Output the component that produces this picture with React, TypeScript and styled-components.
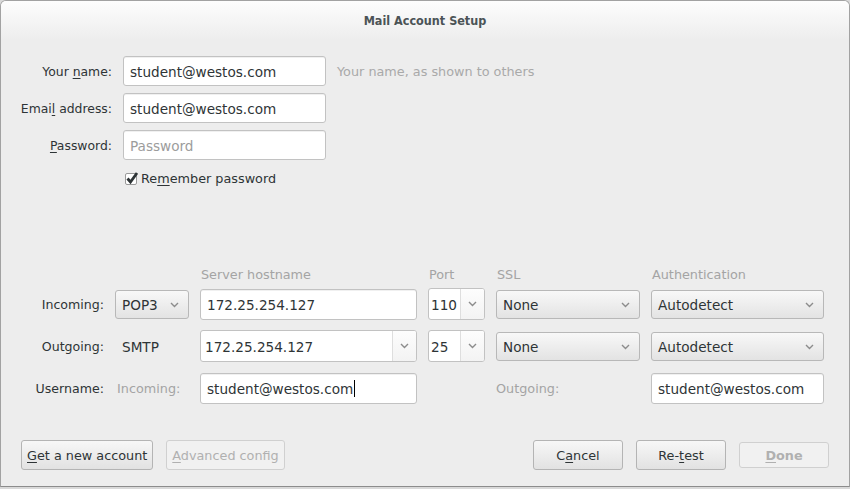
import React from 'react'
import styled, { createGlobalStyle } from 'styled-components'

const GlobalStyle = createGlobalStyle`
  html, body {
    margin: 0;
    padding: 0;
    background: #d9d9d9;
    overflow: hidden;
  }
  body {
    font-family: 'DejaVu Sans', 'Open Sans', sans-serif;
    color: #2e3436;
  }
`

const Chevron = () => (
  <svg width="9" height="6" viewBox="0 0 9 6">
    <polyline points="1,1 4.5,4.5 8,1" fill="none" stroke="#8c8c8c" strokeWidth="1.4" />
  </svg>
)

const Key: React.FC<{ children: React.ReactNode }> = ({ children }) => <Mnemonic>{children}</Mnemonic>

export default function App() {
  return (
    <>
      <GlobalStyle />
      <Window>
        <TitleBar>Mail Account Setup</TitleBar>
        <Content>
          <TopForm>
            <Label>
              Your <Key>n</Key>ame:
            </Label>
            <Field>student@westos.com</Field>
            <Hint>Your name, as shown to others</Hint>

            <Label>
              Emai<Key>l</Key> address:
            </Label>
            <Field>student@westos.com</Field>
            <span />

            <Label>
              <Key>P</Key>assword:
            </Label>
            <Field placeholder>Password</Field>
            <span />

            <span />
            <CheckRow>
              <svg width="15" height="15" viewBox="0 0 15 15">
                <rect x="0.5" y="2.5" width="11" height="11" rx="1.5" fill="#fff" stroke="#9a9a9a" />
                <polyline points="2.5,7.5 5.5,11 12,2" fill="none" stroke="#2e3436" strokeWidth="2.8" />
              </svg>
              <CheckText>
                Re<Key>m</Key>ember password
              </CheckText>
            </CheckRow>
          </TopForm>

          <ServerHeader>
            <span />
            <span />
            <ColHead>Server hostname</ColHead>
            <ColHead>Port</ColHead>
            <ColHead>SSL</ColHead>
            <ColHead>Authentication</ColHead>
          </ServerHeader>

          <ServerGrid>
            <RowLabel>Incoming:</RowLabel>
            <Select>
              POP3
              <Chevron />
            </Select>
            <Field $tall>172.25.254.127</Field>
            <Combo>
              <ComboText $pad={2}>110</ComboText>
              <ComboArrow>
                <Chevron />
              </ComboArrow>
            </Combo>
            <Select>
              None
              <Chevron />
            </Select>
            <Select>
              Autodetect
              <Chevron />
            </Select>

            <RowLabel>Outgoing:</RowLabel>
            <Plain>SMTP</Plain>
            <Combo>
              <ComboText $pad={4}>172.25.254.127</ComboText>
              <ComboArrow>
                <Chevron />
              </ComboArrow>
            </Combo>
            <Combo>
              <ComboText $pad={2}>25</ComboText>
              <ComboArrow>
                <Chevron />
              </ComboArrow>
            </Combo>
            <Select>
              None
              <Chevron />
            </Select>
            <Select>
              Autodetect
              <Chevron />
            </Select>

            <RowLabel>Username:</RowLabel>
            <Muted>Incoming:</Muted>
            <Field $tall>
              student@westos.com
              <Caret />
            </Field>
            <span />
            <Muted $left={0}>Outgoing:</Muted>
            <Field $tall>student@westos.com</Field>
          </ServerGrid>

          <ButtonBar>
            <Group>
              <Button>
                <Key>G</Key>et a new account
              </Button>
              <Button disabled>
                <Key>A</Key>dvanced config
              </Button>
            </Group>
            <Group>
              <Button $wide>
                C<Key>a</Key>ncel
              </Button>
              <Button $wide>
                Re-<Key>t</Key>est
              </Button>
              <Button $wide $default disabled>
                <Key>D</Key>one
              </Button>
            </Group>
          </ButtonBar>
        </Content>
      </Window>
    </>
  )
}

const Window = styled.div`
  box-sizing: border-box;
  height: 487px;
  display: flex;
  flex-direction: column;
  background: #ededed;
  border: 1px solid #a2a2a2;
  border-bottom-color: #8c8c8c;
  border-radius: 6px 6px 0 0;
  overflow: hidden;
`

const TitleBar = styled.div`
  height: 39px;
  flex-shrink: 0;
  display: flex;
  align-items: center;
  justify-content: center;
  background: linear-gradient(#fdfdfd, #ededed);
  font-family: 'DejaVu Sans Condensed', 'DejaVu Sans', sans-serif;
  font-stretch: condensed;
  font-weight: bold;
  font-size: 12.5px;
  color: #4b5356;
`

const Content = styled.div`
  flex: 1;
  display: flex;
  flex-direction: column;
  padding-top: 16px;
`

const Mnemonic = styled.span`
  text-decoration: underline;
  text-underline-offset: 2px;
`

const TopForm = styled.div`
  display: grid;
  grid-template-columns: 111px 203px auto;
  grid-template-rows: 30px 30px 30px 22px;
  column-gap: 11px;
  row-gap: 7px;
  align-items: center;
`

const Label = styled.div`
  text-align: right;
  font-size: 12.4px;
  padding-top: 1px;
  white-space: nowrap;
`

const Hint = styled.div`
  font-size: 12.8px;
  color: #a9a9a9;
  padding-top: 1px;
  white-space: nowrap;
`

const Field = styled.div<{ placeholder?: boolean; $tall?: boolean }>`
  box-sizing: border-box;
  height: ${p => (p.$tall ? 31 : 30)}px;
  display: flex;
  align-items: center;
  padding: 1px 0 0 6px;
  background: #fff;
  border: 1px solid #c2c2c2;
  border-radius: 3px;
  box-shadow: inset 0 1px 0 #f0f0f0;
  font-size: 13.6px;
  white-space: nowrap;
  color: ${p => (p.placeholder ? '#9c9c9c' : '#2e3436')};
`

const Caret = styled.span`
  display: inline-block;
  width: 1px;
  height: 17px;
  background: #000;
  margin-left: 1px;
`

const CheckRow = styled.div`
  display: flex;
  align-items: center;
  margin-left: 2px;
`

const CheckText = styled.span`
  font-size: 12.8px;
  margin-left: 1px;
`

const columns = '103px 74px 217px 57px 144px 173px'

const ServerHeader = styled.div`
  display: grid;
  grid-template-columns: ${columns};
  column-gap: 11px;
  height: 16px;
  align-items: center;
  margin-top: 77px;
  margin-bottom: 6px;
`

const ColHead = styled.div`
  font-size: 12.8px;
  color: #a4a4a4;
  padding-left: 1px;
  white-space: nowrap;
`

const ServerGrid = styled.div`
  display: grid;
  grid-template-columns: ${columns};
  grid-template-rows: 32px 32px 32px;
  column-gap: 11px;
  row-gap: 10px;
  align-items: center;
`

const RowLabel = styled.div`
  text-align: right;
  font-size: 12.6px;
  padding-top: 1px;
`

const Plain = styled.div`
  font-size: 13.6px;
  padding: 1px 0 0 7px;
`

const Muted = styled.div<{ $left?: number }>`
  font-size: 12.8px;
  color: #a4a4a4;
  padding-top: 1px;
  padding-left: ${p => (p.$left ?? 2)}px;
  white-space: nowrap;
`

const Select = styled.div`
  box-sizing: border-box;
  height: 29px;
  display: flex;
  align-items: center;
  justify-content: space-between;
  padding: 1px 9px 0 6px;
  background: linear-gradient(#f8f8f8, #e3e3e3);
  border: 1px solid #b8b8b8;
  border-radius: 3px;
  font-size: 13.6px;
`

const Combo = styled.div`
  box-sizing: border-box;
  height: 32px;
  display: flex;
  background: #fff;
  border: 1px solid #c2c2c2;
  border-radius: 3px;
  overflow: hidden;
`

const ComboText = styled.div<{ $pad: number }>`
  flex: 1;
  display: flex;
  align-items: center;
  padding: 1px 0 0 ${p => p.$pad}px;
  font-size: 13.6px;
  white-space: nowrap;
`

const ComboArrow = styled.div`
  width: 23px;
  display: flex;
  align-items: center;
  justify-content: center;
  border-left: 1px solid #dedede;
  background: linear-gradient(#fdfdfd, #f3f3f3);
`

const ButtonBar = styled.div`
  margin-top: auto;
  display: flex;
  justify-content: space-between;
  align-items: center;
  padding: 0 20px 16px 20px;
`

const Group = styled.div`
  display: flex;
  align-items: center;
  gap: 13px;
`

const Button = styled.button<{ $wide?: boolean; $default?: boolean }>`
  box-sizing: border-box;
  height: ${p => (p.$default ? 26 : 30)}px;
  min-width: ${p => (p.$wide ? 90 : 0)}px;
  padding: 1px 5px 0;
  font-family: 'DejaVu Sans', sans-serif;
  font-size: 12.8px;
  font-weight: ${p => (p.$default ? 'bold' : 'normal')};
  color: #2e3436;
  background: linear-gradient(#f7f7f7, #e2e2e2);
  border: 1px solid #b4b4b4;
  border-radius: 3px;

  &:disabled {
    color: #b0b0b0;
    background: #f1f1f1;
    border-color: #d0d0d0;
  }
`
